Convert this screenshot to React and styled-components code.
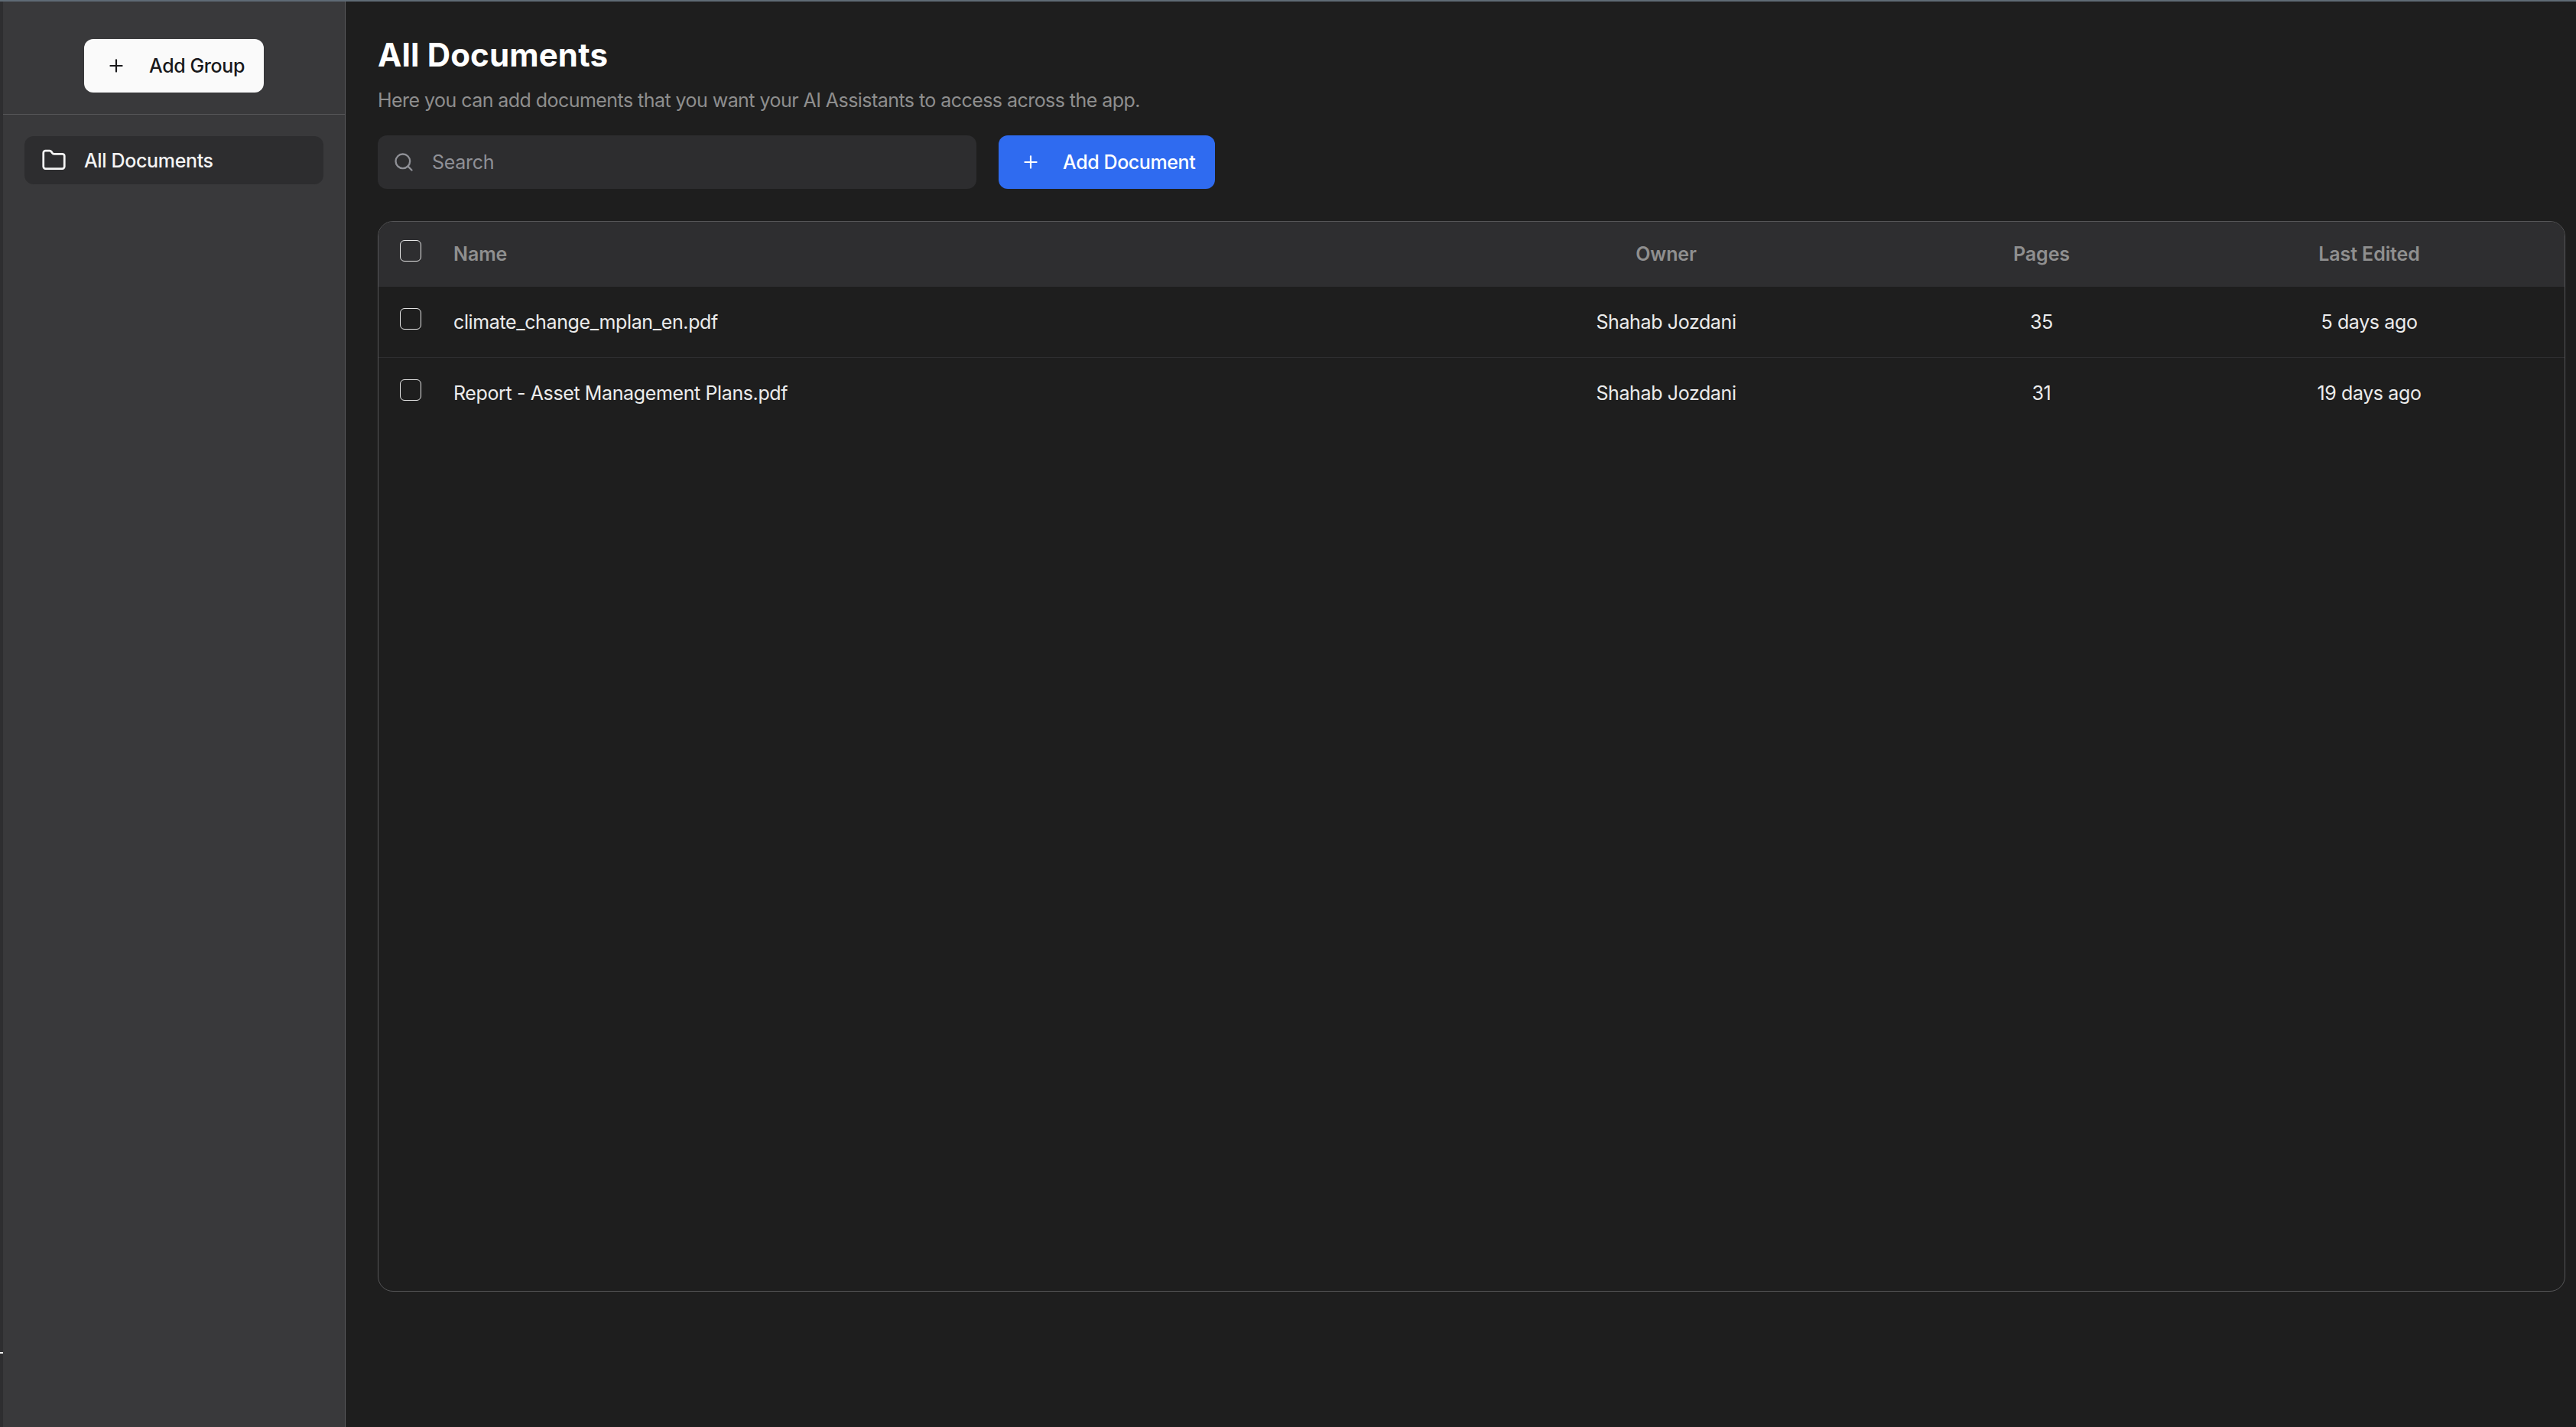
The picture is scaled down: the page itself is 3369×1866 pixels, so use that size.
import React from "react";
import styled, { createGlobalStyle } from "styled-components";
import { Plus, Search, Folder } from "lucide-react";

const GlobalStyle = createGlobalStyle`
  html, body {
    margin: 0;
    padding: 0;
    background: #1e1e1e;
    font-family: Inter, "Liberation Sans", sans-serif;
  }
  * {
    box-sizing: border-box;
  }
`;

const Page = styled.div`
  position: relative;
  display: flex;
  flex-direction: column;
  width: 3369px;
  height: 1866px;
  overflow: hidden;
  background: #1e1e1e;
`;

const TopStrip = styled.div`
  flex: none;
  height: 2px;
  background: #5f6b75;
`;

const Body = styled.div`
  flex: 1;
  display: flex;
  min-height: 0;
`;

const EdgeStrip = styled.div`
  flex: none;
  width: 4px;
  background: #2e2e30;
`;

const EdgeTick = styled.div`
  position: absolute;
  left: 0;
  top: 1768px;
  width: 4px;
  height: 2px;
  background: #f0f0f0;
`;

const Sidebar = styled.aside`
  flex: none;
  width: 448px;
  display: flex;
  flex-direction: column;
  background: #39393b;
  border-right: 1px solid #5c5c5e;
`;

const SidebarTop = styled.div`
  flex: none;
  height: 148px;
  padding-top: 49px;
  display: flex;
  justify-content: center;
  border-bottom: 1px solid #565658;
`;

const Button = styled.button`
  display: flex;
  align-items: center;
  height: 70px;
  padding: 0 ${(p) => p.$pad}px 0 ${(p) => p.$padLeft}px;
  gap: ${(p) => p.$gap}px;
  border: 0;
  border-radius: 12px;
  font: 500 25px Inter, "Liberation Sans", sans-serif;
  letter-spacing: -0.4px;
  background: ${(p) => (p.$primary ? "#2f6bf0" : "#fafafa")};
  color: ${(p) => (p.$primary ? "#ffffff" : "#18181b")};
`;

const GroupList = styled.div`
  padding: 28px 28px 0 28px;
`;

const GroupItem = styled.div`
  display: flex;
  align-items: center;
  gap: 23px;
  height: 63px;
  padding-left: 22px;
  border-radius: 12px;
  background: #2d2d2f;
  color: #f4f4f4;
  font-size: 25px;
  font-weight: 500;
  letter-spacing: -0.35px;
`;

const Main = styled.main`
  flex: 1;
  min-width: 0;
  padding: 48px 14px 0 42px;
`;

const Title = styled.h1`
  margin: 0;
  font-size: 42px;
  line-height: 44px;
  font-weight: 700;
  letter-spacing: 0.15px;
  color: #ffffff;
`;

const Subtitle = styled.p`
  margin: 22px 0 0;
  font-size: 25px;
  line-height: 30px;
  letter-spacing: -0.55px;
  color: #8e8e8e;
`;

const Toolbar = styled.div`
  display: flex;
  gap: 29px;
  margin-top: 31px;
`;

const SearchBox = styled.div`
  display: flex;
  align-items: center;
  gap: 23px;
  width: 783px;
  height: 70px;
  padding-left: 20px;
  border-radius: 12px;
  background: #2d2d2f;
  color: #8f9096;
  font-size: 25px;
  letter-spacing: -0.3px;
`;

const TableWrap = styled.div`
  height: 1400px;
  margin-top: 42px;
  border: 1.5px solid #565658;
  border-radius: 20px;
  overflow: hidden;
`;

const Row = styled.div`
  display: grid;
  grid-template-columns: 98px 1268px 636px 346px 1fr;
  align-items: center;
  height: ${(p) => (p.$header ? 85 : 92.5)}px;
  padding-bottom: ${(p) => (p.$header ? 2 : 0)}px;
  background: ${(p) => (p.$header ? "#2e2e30" : "transparent")};
  border-bottom: ${(p) => (p.$header ? "0" : "1px solid #2e2e30")};
  color: ${(p) => (p.$header ? "#8f8f8f" : "#ececec")};
  font-size: 25px;
  font-weight: ${(p) => (p.$header ? 600 : 400)};
  letter-spacing: ${(p) => (p.$header ? -0.1 : -0.38)}px;

  &:last-child {
    border-bottom: 0;
  }
`;

const CheckCell = styled.div`
  display: flex;
  padding: 0 0 8px 28px;
`;

const Check = styled.span`
  display: block;
  width: 28px;
  height: 28px;
  border: 1.5px solid #e6e6e6;
  border-radius: 6px;
`;

const Cell = styled.div`
  text-align: ${(p) => (p.$left ? "left" : "center")};
`;

const docs = [
  { name: "climate_change_mplan_en.pdf", owner: "Shahab Jozdani", pages: 35, edited: "5 days ago" },
  { name: "Report - Asset Management Plans.pdf", owner: "Shahab Jozdani", pages: 31, edited: "19 days ago" },
];

export default function App() {
  return (
    <Page>
      <GlobalStyle />
      <TopStrip />
      <Body>
        <EdgeStrip />
        <Sidebar>
          <SidebarTop>
            <Button $padLeft={29} $pad={25} $gap={30}>
              <Plus size={26} strokeWidth={2} />
              Add Group
            </Button>
          </SidebarTop>
          <GroupList>
            <GroupItem>
              <Folder size={33} strokeWidth={2} />
              All Documents
            </GroupItem>
          </GroupList>
        </Sidebar>
        <Main>
          <Title>All Documents</Title>
          <Subtitle>Here you can add documents that you want your AI Assistants to access across the app.</Subtitle>
          <Toolbar>
            <SearchBox>
              <Search size={28} strokeWidth={2} />
              Search
            </SearchBox>
            <Button $primary $padLeft={29} $pad={26} $gap={29}>
              <Plus size={26} strokeWidth={2} />
              Add Document
            </Button>
          </Toolbar>
          <TableWrap>
            <Row $header>
              <CheckCell>
                <Check />
              </CheckCell>
              <Cell $left>Name</Cell>
              <Cell>Owner</Cell>
              <Cell>Pages</Cell>
              <Cell>Last Edited</Cell>
            </Row>
            {docs.map((doc) => (
              <Row key={doc.name}>
                <CheckCell>
                  <Check />
                </CheckCell>
                <Cell $left>{doc.name}</Cell>
                <Cell>{doc.owner}</Cell>
                <Cell>{doc.pages}</Cell>
                <Cell>{doc.edited}</Cell>
              </Row>
            ))}
          </TableWrap>
        </Main>
      </Body>
      <EdgeTick />
    </Page>
  );
}
